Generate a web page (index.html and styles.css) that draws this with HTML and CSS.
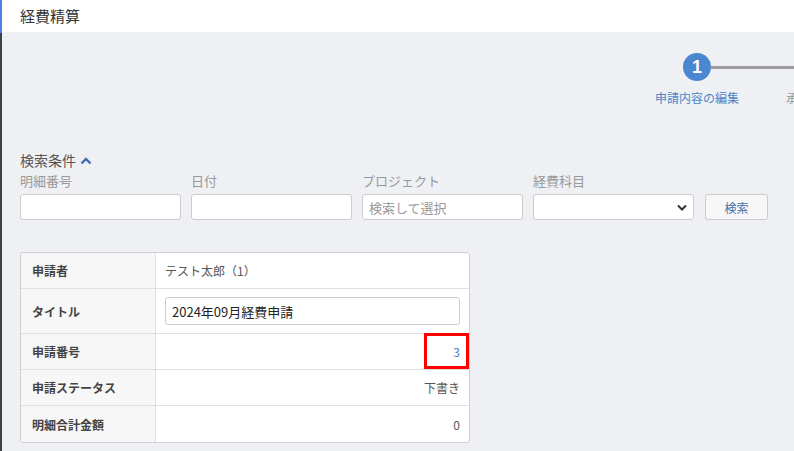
FILE: index.html
```html
<!DOCTYPE html>
<html lang="ja">
<head>
<meta charset="utf-8">
<link rel="stylesheet" href="styles.css">
</head>
<body>
<div class="app">
  <div class="rail"><div class="rail-top"></div></div>
  <div class="main">
    <header class="header">経費精算</header>
    <div class="content">
      <div class="stepper">
        <div class="step">
          <div class="circle">1</div>
          <div class="step-label">申請内容の編集</div>
        </div>
        <div class="step-line"></div>
        <div class="step next">
          <div class="step-label gray">承</div>
        </div>
      </div>

      <div class="search-title">検索条件
        <svg class="chev" width="12" height="8" viewBox="0 0 12 8"><path d="M1.5 6.5 L6 2 L10.5 6.5" fill="none" stroke="#3f6db3" stroke-width="2.4"/></svg>
      </div>
      <div class="search-row">
        <div class="field"><label>明細番号</label><input type="text"></div>
        <div class="field"><label>日付</label><input type="text"></div>
        <div class="field"><label>プロジェクト</label><input type="text" placeholder="検索して選択"></div>
        <div class="field"><label>経費科目</label>
          <div class="select"><svg width="10" height="7" viewBox="0 0 10 7"><path d="M1 1.5 L5 5.5 L9 1.5" fill="none" stroke="#333" stroke-width="2"/></svg></div>
        </div>
        <button class="btn">検索</button>
      </div>

      <div class="table">
        <div class="row r36"><div class="th">申請者</div><div class="td">テスト太郎（1）</div></div>
        <div class="row r45"><div class="th">タイトル</div><div class="td"><div class="title-input">2024年09月経費申請</div></div></div>
        <div class="row r36"><div class="th">申請番号</div><div class="td right link">3<span class="hl"></span></div></div>
        <div class="row r36"><div class="th">申請ステータス</div><div class="td right">下書き</div></div>
        <div class="row r36 last"><div class="th">明細合計金額</div><div class="td right">0</div></div>
      </div>
    </div>
  </div>
</div>
</body>
</html>
```

FILE: styles.css
```css
* { box-sizing: border-box; }
html, body { margin: 0; padding: 0; }
body {
  width: 794px; height: 451px; overflow: hidden;
  font-family: "Noto Sans CJK JP", "Noto Sans", sans-serif;
  background: #eff0f4;
  color: #333;
}
.app { display: flex; height: 451px; }
.rail { width: 2px; background: #3b3f47; flex: none; }
.rail-top { height: 33px; background: #4a80e0; }
.main { flex: 1; display: flex; flex-direction: column; min-width: 0; }
.header {
  height: 32px; background: #fff; padding-left: 18px;
  font-size: 15px; line-height: 32px; color: #333;
}
.content { flex: 1; padding: 0 0 0 18px; position: relative; }
.stepper {
  display: flex; align-items: flex-start; justify-content: flex-end;
  padding-top: 21px; height: 118px;
}
.step { display: flex; flex-direction: column; align-items: center; width: 84px; flex: none; }
.circle {
  width: 28px; height: 28px; border-radius: 50%; background: #4a87d0;
  color: #fff; font-family: "Liberation Sans", Arial, sans-serif; font-weight: bold;
  font-size: 18px; line-height: 28px; text-align: center;
}
.step-label { font-size: 12px; color: #4a86c8; margin-top: 9px; line-height: 16px; white-space: nowrap; }
.step-label.gray { color: #999; }
.step-line { width: 83px; flex: none; height: 3px; background: #9e9e9e; margin-top: 12.5px; margin-left: -28px; }
.step.next { width: 8px; margin-left: -8px; align-items: flex-start; overflow: hidden; }
.step.next .step-label { margin-top: 37px; }

.search-title { font-size: 14px; color: #555; line-height: 20px; display: flex; align-items: center; gap: 4px; }
.chev { margin-top: 1px; }
.search-row { display: flex; align-items: flex-end; gap: 10px; margin-top: 2px; }
.field { display: flex; flex-direction: column; width: 161px; }
.field label { font-size: 13px; color: #999; line-height: 18px; margin-bottom: 4px; }
.field input, .select {
  height: 26px; border: 1px solid #ccc; border-radius: 3px; background: #fff;
  font-family: inherit; font-size: 13px; padding: 0 6px; outline: none; width: 100%;
}
.field input::placeholder { color: #999; }
.select { display: flex; align-items: center; justify-content: flex-end; padding-right: 6px; }
.btn {
  width: 63px; height: 26px; margin-left: 1px; border: 1px solid #ccc; border-radius: 3px;
  background: #f7f7f7; color: #4a6fa8; font-family: inherit; font-size: 12px;
}
.table {
  margin-top: 32px; width: 450px; border: 1px solid #d0d0d0; border-radius: 3px;
  background: #fff; overflow: hidden;
}
.row { display: flex; border-bottom: 1px solid #e0e0e0; }
.row.last { border-bottom: none; }
.r36 { height: 36px; }
.r45 { height: 45px; }
.th {
  width: 135px; flex: none; background: #f7f7f7; border-right: 1px solid #e0e0e0;
  font-size: 12px; font-weight: bold; color: #444; padding-left: 11px;
  display: flex; align-items: center;
}
.td { flex: 1; display: flex; align-items: center; padding: 0 9px; font-size: 12px; color: #555; position: relative; }
.td.right { justify-content: flex-end; }
.td.link { color: #4a7cc8; }
.title-input {
  width: 100%; height: 28px; border: 1px solid #ccc; border-radius: 3px;
  font-size: 13px; color: #222; padding: 0 6px; display: flex; align-items: center;
}
.hl {
  position: absolute; right: 0; top: -1px; width: 45px; height: 36px;
  border: 3px solid #f00;
}
```
